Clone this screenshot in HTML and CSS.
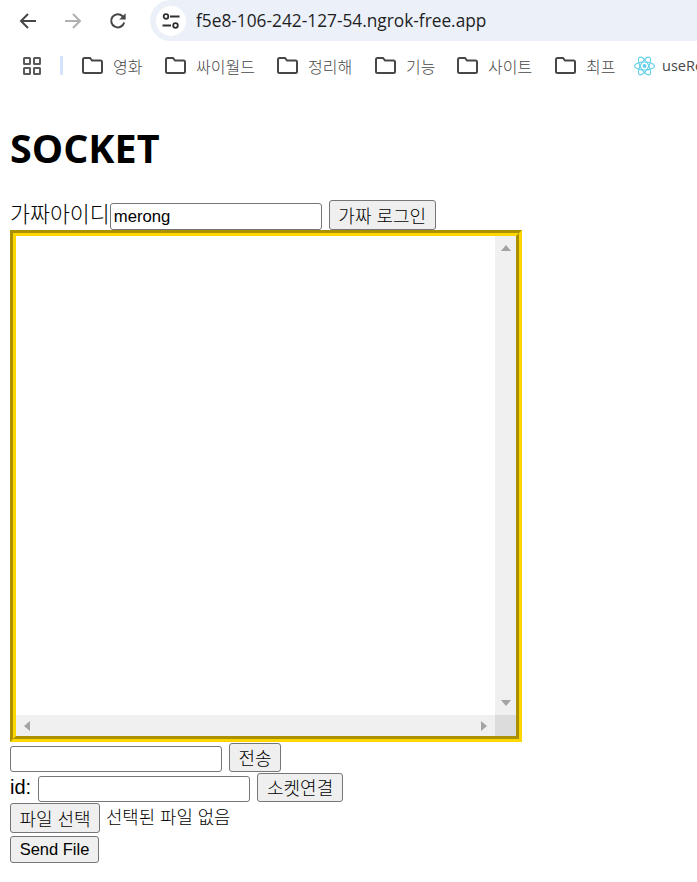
FILE: index.html
```html
<!DOCTYPE html>
<html lang="ko">
<head>
    <meta charset="UTF-8">
    <meta name="viewport" content="width=device-width, initial-scale=1.0">
    <title>SOCKET</title>
    <link rel="stylesheet" href="styles.css">
</head>
<body>

    <!-- 브라우저 상단 -->
    <div class="toolbar">
        <svg class="nav" width="20" height="20" viewBox="0 0 20 20"><path d="M18 10H3M10 3l-7 7 7 7" fill="none" stroke="#474747" stroke-width="2"/></svg>
        <svg class="nav" width="20" height="20" viewBox="0 0 20 20"><path d="M2 10h15M10 3l7 7-7 7" fill="none" stroke="#b0b0b0" stroke-width="2"/></svg>
        <svg class="nav" width="20" height="20" viewBox="0 0 20 20"><path d="M16.200 11.500A6.600 6.600 0 1 1 14.600 5.200L17 7.400" fill="none" stroke="#474747" stroke-width="2"/><path d="M17.600 2.200v6.400h-6.400z" fill="#474747"/></svg>
        <div class="omnibox">
            <span class="site-info">
                <svg width="18" height="16" viewBox="0 0 18 16"><g fill="none" stroke="#303030" stroke-width="1.800"><circle cx="4" cy="3.500" r="2.300"/><path d="M8 3.500h9.500M.5 12.500h8.500"/><circle cx="13.500" cy="12.500" r="2.300"/></g></svg>
            </span>
            <span class="url">f5e8-106-242-127-54.ngrok-free.app</span>
        </div>
    </div>

    <div class="bookmarks">
        <svg class="apps" width="18" height="18" viewBox="0 0 18 18"><g fill="none" stroke="#5a5a5a" stroke-width="2"><rect x="1" y="1" width="6" height="6" rx=".5"/><rect x="11" y="1" width="6" height="6" rx=".5"/><rect x="1" y="11" width="6" height="6" rx=".5"/><rect x="11" y="11" width="6" height="6" rx=".5"/></g></svg>
        <span class="divider"></span>
        <div class="mark m1"><svg width="21" height="17" viewBox="0 0 21 17"><path class="folder" d="M1 2.500A1.500 1.500 0 0 1 2.500 1H8l2 2.500h8.500A1.500 1.500 0 0 1 20 5v9.500a1.500 1.500 0 0 1-1.500 1.500h-16A1.500 1.500 0 0 1 1 14.500z"/></svg><span>영화</span></div>
        <div class="mark m2"><svg width="21" height="17" viewBox="0 0 21 17"><path class="folder" d="M1 2.500A1.500 1.500 0 0 1 2.500 1H8l2 2.500h8.500A1.500 1.500 0 0 1 20 5v9.500a1.500 1.500 0 0 1-1.500 1.500h-16A1.500 1.500 0 0 1 1 14.500z"/></svg><span>싸이월드</span></div>
        <div class="mark m3"><svg width="21" height="17" viewBox="0 0 21 17"><path class="folder" d="M1 2.500A1.500 1.500 0 0 1 2.500 1H8l2 2.500h8.500A1.500 1.500 0 0 1 20 5v9.500a1.500 1.500 0 0 1-1.500 1.500h-16A1.500 1.500 0 0 1 1 14.500z"/></svg><span>정리해</span></div>
        <div class="mark m4"><svg width="21" height="17" viewBox="0 0 21 17"><path class="folder" d="M1 2.500A1.500 1.500 0 0 1 2.500 1H8l2 2.500h8.500A1.500 1.500 0 0 1 20 5v9.500a1.500 1.500 0 0 1-1.500 1.500h-16A1.500 1.500 0 0 1 1 14.500z"/></svg><span>기능</span></div>
        <div class="mark m5"><svg width="21" height="17" viewBox="0 0 21 17"><path class="folder" d="M1 2.500A1.500 1.500 0 0 1 2.500 1H8l2 2.500h8.500A1.500 1.500 0 0 1 20 5v9.500a1.500 1.500 0 0 1-1.500 1.500h-16A1.500 1.500 0 0 1 1 14.500z"/></svg><span>사이트</span></div>
        <div class="mark m6"><svg width="21" height="17" viewBox="0 0 21 17"><path class="folder" d="M1 2.500A1.500 1.500 0 0 1 2.500 1H8l2 2.500h8.500A1.500 1.500 0 0 1 20 5v9.500a1.500 1.500 0 0 1-1.500 1.500h-16A1.500 1.500 0 0 1 1 14.500z"/></svg><span>최프</span></div>
        <div class="mark react"><svg width="21" height="20" viewBox="0 0 21 20"><g fill="none" stroke="#61cfe8" stroke-width="1.100"><ellipse cx="10.500" cy="10" rx="10" ry="4"/><ellipse cx="10.500" cy="10" rx="10" ry="4" transform="rotate(60 10.500 10)"/><ellipse cx="10.500" cy="10" rx="10" ry="4" transform="rotate(120 10.500 10)"/></g><circle cx="10.500" cy="10" r="2" fill="#61cfe8"/></svg><span>useRef</span></div>
    </div>

    <!-- 페이지 내용 -->
    <main class="page">
        <h1>SOCKET</h1>

        <div class="row row-login">
            <span>가짜아이디</span><input class="field" type="text" value="merong">
            <button class="btn btn-ko btn-login">가짜 로그인</button>
        </div>

        <div class="chat">
            <div class="chat-body"></div>
            <div class="bar bar-v">
                <i class="arrow arrow-up"></i>
                <i class="arrow arrow-down"></i>
            </div>
            <div class="bar bar-h">
                <i class="arrow arrow-left"></i>
                <i class="arrow arrow-right"></i>
            </div>
            <div class="bar-corner"></div>
        </div>

        <div class="row row-send">
            <input class="field" type="text">
            <button class="btn btn-ko btn-send">전송</button>
        </div>

        <div class="row row-id">
            <span>id:</span>
            <input class="field" type="text">
            <button class="btn btn-ko btn-connect">소켓연결</button>
        </div>

        <div class="row row-file">
            <button class="btn btn-ko btn-file">파일 선택</button>
            <span class="file-name">선택된 파일 없음</span>
        </div>

        <div class="row row-submit">
            <button class="btn btn-submit">Send File</button>
        </div>
    </main>

</body>
</html>
```

FILE: styles.css
```css
body {
    margin: 0;
    background: white;
    color: black;
    font-family: "Liberation Sans", "Noto Sans CJK KR", sans-serif;
    font-size: 20px;
    overflow: hidden;
}

/* 브라우저 상단 */
.toolbar {
    display: flex;
    align-items: center;
    height: 41px;
    padding-left: 18px;
}

.nav {
    margin-right: 25px;
    flex: none;
}

.omnibox {
    display: flex;
    align-items: center;
    flex: 1;
    height: 41px;
    margin-left: -3px;
    padding-left: 6px;
    background: #ebf0f9;
    border-radius: 21px 0 0 21px;
}

.site-info {
    display: flex;
    align-items: center;
    justify-content: center;
    width: 30px;
    height: 30px;
    background: white;
    border-radius: 50%;
}

.url {
    margin-left: 10px;
    font-family: "Open Sans", "Noto Sans", sans-serif;
    font-size: 17.3px;
    color: #1f1f1f;
}

.bookmarks {
    display: flex;
    align-items: center;
    height: 49px;
    padding-left: 23px;
    overflow: hidden;
    white-space: nowrap;
}

.apps {
    flex: none;
}

.divider {
    flex: none;
    width: 3px;
    height: 19px;
    margin: 0 19px 0 19px;
    background: #d3e3fd;
}

.mark {
    display: flex;
    align-items: center;
    flex: none;
    gap: 10px;
    font-family: "Noto Sans CJK KR", sans-serif;
    font-size: 16px;
    font-weight: 300;
    color: #474747;
}

.m1 { width: 83px; }
.m2 { width: 112px; }
.m3 { width: 98px; }
.m4 { width: 82px; }
.m5 { width: 98px; }
.m6 { width: 79px; }

.react {
    gap: 7px;
    font-family: "Open Sans", sans-serif;
    font-size: 14.5px;
    font-weight: 400;
}

.folder {
    fill: none;
    stroke: #474747;
    stroke-width: 2;
}

/* 페이지 내용 */
.page {
    padding: 0 10px;
}

h1 {
    margin: 0;
    padding-top: 28px;
    height: 82px;
    font-family: "Open Sans", "Noto Sans", sans-serif;
    font-size: 39.5px;
    line-height: 60px;
    font-weight: 700;
}

.row {
    display: flex;
    align-items: flex-end;
    white-space: nowrap;
}

.row-login { height: 30px; }
.row-send { height: 30px; gap: 7px; }
.row-id { height: 30px; gap: 7px; }
.row-file { height: 31px; gap: 6px; }
.row-submit { height: 30px; }

.row-login span,
.row-id span {
    align-self: flex-start;
    font-family: "Noto Sans CJK KR", sans-serif;
    font-size: 21.7px;
    font-weight: 300;
    line-height: 25px;
}

.row-id span {
    font-family: "Liberation Sans", sans-serif;
    font-size: 20px;
    font-weight: 400;
    line-height: 30px;
}

.field {
    box-sizing: border-box;
    width: 212px;
    height: 26px;
    margin: 0;
    padding: 1px 3px;
    border: 1px solid #767676;
    border-radius: 3px;
    background: white;
    font-family: "Liberation Sans", sans-serif;
    font-size: 16.7px;
    color: black;
}

.row-login .field {
    height: 27px;
}

.btn {
    box-sizing: border-box;
    height: 29px;
    margin: 0;
    padding: 0;
    border: 1px solid #767676;
    border-radius: 3px;
    background: #efefef;
    font-family: "Liberation Sans", "Noto Sans CJK KR", sans-serif;
    font-size: 16.5px;
    color: black;
}

.btn-ko {
    padding-bottom: 1px;
    font-size: 18px;
    font-weight: 300;
}

.btn-login { width: 107px; height: 30px; margin-left: 7px; }
.btn-send { width: 52px; }
.btn-connect { width: 86px; }
.btn-file { width: 90px; height: 30px; }
.btn-submit { width: 89px; height: 27px; }

.file-name {
    align-self: center;
    margin-bottom: 3px;
    font-family: "Noto Sans CJK KR", sans-serif;
    font-size: 17.8px;
    font-weight: 300;
}

/* 채팅 영역 */
.chat {
    display: grid;
    grid-template-columns: 479px 21px;
    grid-template-rows: 479px 21px;
    width: 500px;
    border: 6px groove gold;
}

.bar,
.bar-corner {
    display: flex;
    justify-content: space-between;
    align-items: center;
    background: #f0f0f0;
}

.bar-v {
    flex-direction: column;
    padding: 9px 0;
}

.bar-h {
    padding: 0 8px;
}

.bar-corner {
    background: #dcdcdc;
}

.arrow {
    width: 0;
    height: 0;
    border: 5px solid transparent;
}

.arrow-up { border-top: 0; border-bottom: 6px solid #a3a3a3; }
.arrow-down { border-bottom: 0; border-top: 6px solid #a3a3a3; }
.arrow-left { border-left: 0; border-right: 6px solid #a3a3a3; }
.arrow-right { border-right: 0; border-left: 6px solid #a3a3a3; }
```
